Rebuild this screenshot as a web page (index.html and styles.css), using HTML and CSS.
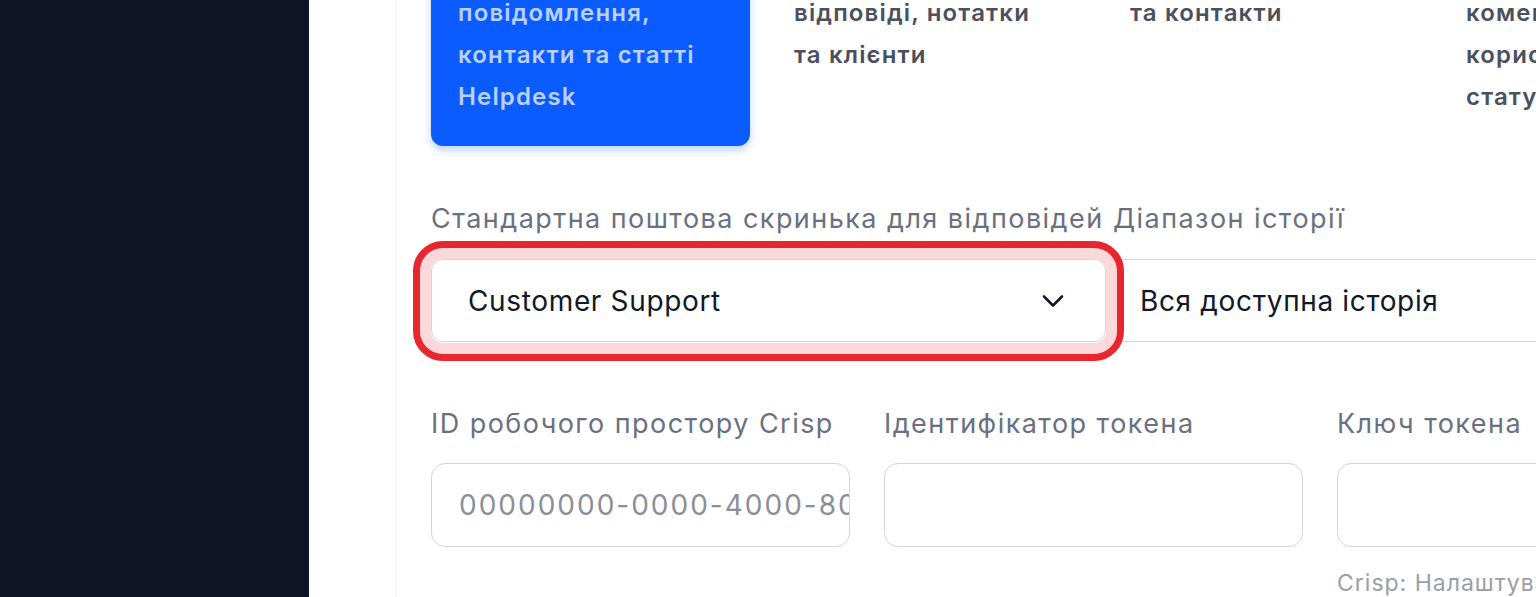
FILE: index.html
```html
<!DOCTYPE html>
<html lang="uk">
<head>
<meta charset="utf-8">
<title>Crisp import</title>
<link rel="stylesheet" href="styles.css">
</head>
<body>
<div class="app">
  <aside class="sidebar"></aside>
  <main class="main">
    <section class="panel">
      <div class="sources">
        <div class="source source-active">
          <p class="source-text">Імпортувати розмови,<br>повідомлення,<br>контакти та статті<br>Helpdesk</p>
        </div>
        <div class="source">
          <p class="source-text">Розмови, збережені<br>відповіді, нотатки<br>та клієнти</p>
        </div>
        <div class="source">
          <p class="source-text">Розмови, повідомлення<br>та контакти</p>
        </div>
        <div class="source">
          <p class="source-text">Тікети, повідомлення,<br>коментарі,<br>користувачі та<br>статуси</p>
        </div>
      </div>

      <div class="field-row two">
        <div class="field">
          <label class="field-label">Стандартна поштова скринька для відповідей</label>
          <div class="select-wrap">
            <div class="select">
              <span>Customer Support</span>
              <svg class="chevron" viewBox="0 0 24 24" width="24" height="24"><path d="M3 7.5l9 9 9-9" fill="none" stroke="#111827" stroke-width="2.6" stroke-linecap="round" stroke-linejoin="round"/></svg>
            </div>
            <div class="highlight"></div>
          </div>
        </div>
        <div class="field">
          <label class="field-label">Діапазон історії</label>
          <div class="select select-plain">
            <span>Вся доступна історія</span>
          </div>
        </div>
      </div>

      <div class="field-row three">
        <div class="field">
          <label class="field-label">ID робочого простору Crisp</label>
          <div class="input"><span class="placeholder">00000000-0000-4000-8000-000000000000</span></div>
        </div>
        <div class="field">
          <label class="field-label">Ідентифікатор токена</label>
          <div class="input"></div>
        </div>
        <div class="field">
          <label class="field-label">Ключ токена</label>
          <div class="input"></div>
          <p class="hint">Crisp: Налаштування → Плагіни → Токени API</p>
        </div>
      </div>
    </section>
  </main>
</div>
</body>
</html>
```

FILE: styles.css
```css
* { box-sizing: border-box; }
html, body {
  margin: 0;
  padding: 0;
  width: 1536px;
  height: 597px;
  overflow: hidden;
  background: #ffffff;
  font-family: "Inter", "Noto Sans", sans-serif;
}
.app {
  display: flex;
  height: 597px;
}
.sidebar {
  flex: 0 0 309px;
  background: #0f1426;
}
.main {
  flex: 1 0 auto;
  padding-left: 86px;
  background: #ffffff;
}
.panel {
  display: flow-root;
  border-left: 1px solid #f1f2f4;
  padding-left: 35px;
  width: 1500px;
  height: 100%;
}
.sources {
  display: grid;
  grid-template-columns: repeat(4, 319px);
  column-gap: 17px;
  margin-top: -78px;
  align-items: start;
}
.source {
  border-radius: 12px;
  padding: 28px 27px;
}
.source-text {
  margin: 0;
  font-size: 24px;
  line-height: 42px;
  letter-spacing: 1.15px;
  font-weight: 600;
  color: #4b5060;
  white-space: nowrap;
}
.source-active {
  background: #0a5cff;
  box-shadow: 0 4px 9px rgba(10, 92, 255, 0.28);
}
.source-active .source-text {
  color: rgba(255, 255, 255, 0.72);
}
.field-row {
  display: grid;
}
.field-row.two {
  margin-top: 55px;
  grid-template-columns: 675px 676px;
  column-gap: 7px;
}
.field-row.three {
  margin-top: 64px;
  grid-template-columns: repeat(3, 419px);
  column-gap: 34px;
}
.field-label {
  display: block;
  font-size: 27px;
  line-height: 36px;
  letter-spacing: 1.45px;
  color: #6b7080;
  white-space: nowrap;
  margin-bottom: 22px;
}
.three .field-label {
  margin-bottom: 21px;
}
.select-wrap {
  position: relative;
}
.select {
  height: 83px;
  border: 1.5px solid #d3d6dc;
  border-radius: 12px;
  padding: 0 40px 0 36px;
  display: flex;
  align-items: center;
  justify-content: space-between;
  font-size: 28px;
  letter-spacing: 0.65px;
  color: #111827;
  background: #fff;
}
.select-plain {
  padding-left: 26px;
  border-right: none;
  border-radius: 12px 0 0 12px;
}
.chevron {
  flex: 0 0 auto;
}
.highlight {
  position: absolute;
  top: -18px;
  left: -18px;
  right: -18px;
  bottom: -19px;
  border: 7px solid #e8262e;
  border-radius: 30px;
  box-shadow: inset 0 0 0 11px #fbd9da;
  pointer-events: none;
  z-index: 2;
}
.input {
  height: 84px;
  border: 1.5px solid #d3d6dc;
  border-radius: 14px;
  padding: 0 0 0 27px;
  display: flex;
  align-items: center;
  overflow: hidden;
  white-space: nowrap;
  font-size: 28px;
}
.placeholder {
  color: #8b8f99;
  letter-spacing: 2px;
}
.hint {
  margin: 21px 0 0;
  font-size: 23px;
  line-height: 30px;
  letter-spacing: 1px;
  color: #9a9ea8;
  white-space: nowrap;
}
```
